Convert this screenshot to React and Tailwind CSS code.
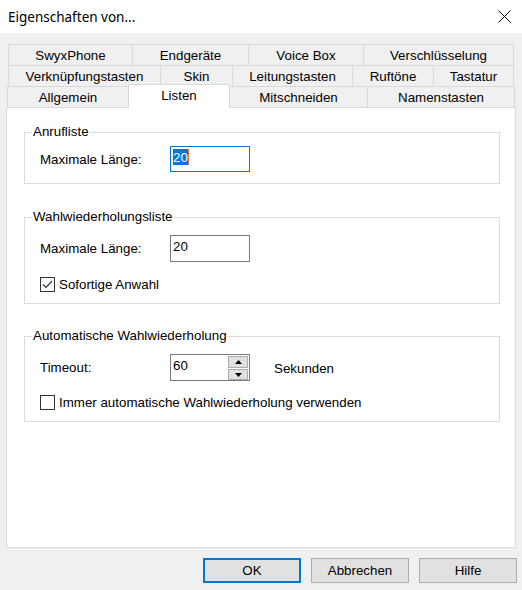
import React from "react";

// tab rows, back to front; widths include the left border
const tabRows = [
  [
    { label: "SwyxPhone", w: "w-[124px]" },
    { label: "Endgeräte", w: "w-[116px]" },
    { label: "Voice Box", w: "w-[115px]" },
    { label: "Verschlüsselung", w: "w-[151px]", last: true },
  ],
  [
    { label: "Verknüpfungstasten", w: "w-[152px]" },
    { label: "Skin", w: "w-[72px]" },
    { label: "Leitungstasten", w: "w-[120px]" },
    { label: "Ruftöne", w: "w-[81px]" },
    { label: "Tastatur", w: "w-[81px]", last: true },
  ],
];

const Tab = ({ label, w, last, noLeft }) => (
  <div
    className={`flex h-[21px] items-center justify-center border-t border-[#d9d9d9] pt-[1px] ${
      noLeft ? "" : "border-l"
    } ${last ? "border-r" : ""} ${w}`}
  >
    {label}
  </div>
);

const CheckBox = ({ checked, label }) => (
  <div className="flex h-[15px] items-center">
    <div className="flex h-[15px] w-[15px] items-center justify-center border border-[#333333] bg-white">
      {checked && (
        <svg width="11" height="9" viewBox="0 0 11 9">
          <path d="M1 4.5 L4 7.5 L10 1" fill="none" stroke="#333" strokeWidth="1.2" />
        </svg>
      )}
    </div>
    <span className="ml-[4px]">{label}</span>
  </div>
);

const Group = ({ title, className, children }) => (
  <fieldset className={`ml-[17px] w-[476px] border border-[#dcdcdc] px-0 ${className}`}>
    <legend className="ml-[7px] px-[1px] leading-4">{title}</legend>
    <div className="pl-[15px]">{children}</div>
  </fieldset>
);

const Spin = () => (
  <div className="flex h-[27px] w-[80px] border border-[#7a7a7a] bg-white">
    <div className="flex-1 pl-[2px] pt-[3px]">60</div>
    <div className="mr-[1px] mt-[1px] flex w-[20px] flex-col gap-[1px]">
      <div className="flex h-[12px] items-center justify-center border border-[#adadad] bg-[#e1e1e1]">
        <svg width="7" height="4" viewBox="0 0 7 4">
          <path d="M3.5 0 L7 4 L0 4 Z" fill="#000" />
        </svg>
      </div>
      <div className="flex h-[11px] items-center justify-center border border-[#adadad] bg-[#e1e1e1]">
        <svg width="7" height="4" viewBox="0 0 7 4">
          <path d="M0 0 L7 0 L3.5 4 Z" fill="#000" />
        </svg>
      </div>
    </div>
  </div>
);

export default function App() {
  return (
    <div className="h-[590px] w-[522px] overflow-hidden bg-[#f0f0f0] font-['Liberation_Sans',Arial,sans-serif] text-[13.33px] leading-[15px] text-black">
      {/* title bar */}
      <div className="flex h-[33px] items-center justify-between bg-white pl-[8px] pr-[11px]">
        <span className="font-['Noto_Sans',sans-serif] text-[13.5px] leading-5">Eigenschaften von...</span>
        <svg width="13" height="13" viewBox="0 0 13 13">
          <path d="M0.5 0.5 L12.5 12.5 M12.5 0.5 L0.5 12.5" stroke="#000" strokeWidth="1" />
        </svg>
      </div>

      {/* tabs */}
      <div className="mt-[11px]">
        {tabRows.map((row, i) => (
          <div key={i} className="ml-[8px] flex">
            {row.map((t) => (
              <Tab key={t.label} {...t} />
            ))}
          </div>
        ))}
        <div className="ml-[7px] flex h-[21px]">
          <Tab label="Allgemein" w="w-[121px]" />
          <div className="relative z-10 -mt-[2px] flex h-[24px] w-[102px] justify-center self-start border-x border-t border-[#d9d9d9] bg-white pt-[3px]">
            Listen
          </div>
          <Tab label="Mitschneiden" w="w-[137px]" noLeft />
          <Tab label="Namenstasten" w="w-[148px]" last />
        </div>
      </div>

      {/* tab page */}
      <div className="ml-[6px] h-[441px] w-[510px] border border-[#d9d9d9] bg-white">
        <Group title="Anrufliste" className="mt-[16px] pb-[11px] pt-[6px]">
          <div className="flex items-center">
            <span className="w-[130px]">Maximale Länge:</span>
            <div className="flex h-[26px] w-[80px] border border-[#0078d7] bg-white pl-[2px] pt-[2px]">
              <span className="h-[16px] bg-[#0078d7] pt-[1px] text-white">20</span>
              <span className="h-[16px] w-px bg-[#e0702a]" />
            </div>
          </div>
        </Group>

        <Group title="Wahlwiederholungsliste" className="mt-[25px] pb-[11px] pt-[10px]">
          <div className="flex items-center">
            <span className="w-[130px]">Maximale Länge:</span>
            <div className="h-[27px] w-[80px] border border-[#7a7a7a] bg-white pl-[2px] pt-[3px]">20</div>
          </div>
          <div className="mt-[15px]">
            <CheckBox checked label="Sofortige Anwahl" />
          </div>
        </Group>

        <Group title="Automatische Wahlwiederholung" className="mt-[24px] pb-[11px] pt-[10px]">
          <div className="flex items-center">
            <span className="w-[130px]">Timeout:</span>
            <Spin />
            <span className="ml-[24px] mt-[2px]">Sekunden</span>
          </div>
          <div className="mt-[14px]">
            <CheckBox label="Immer automatische Wahlwiederholung verwenden" />
          </div>
        </Group>
      </div>

      {/* dialog buttons */}
      <div className="mt-[10px] flex justify-end gap-[10px] pr-[5px]">
        <button className="h-[25px] w-[98px] border-2 border-[#0078d7] bg-[#e1e1e1]">OK</button>
        <button className="h-[25px] w-[98px] border border-[#adadad] bg-[#e1e1e1]">Abbrechen</button>
        <button className="h-[25px] w-[98px] border border-[#adadad] bg-[#e1e1e1]">Hilfe</button>
      </div>
    </div>
  );
}
